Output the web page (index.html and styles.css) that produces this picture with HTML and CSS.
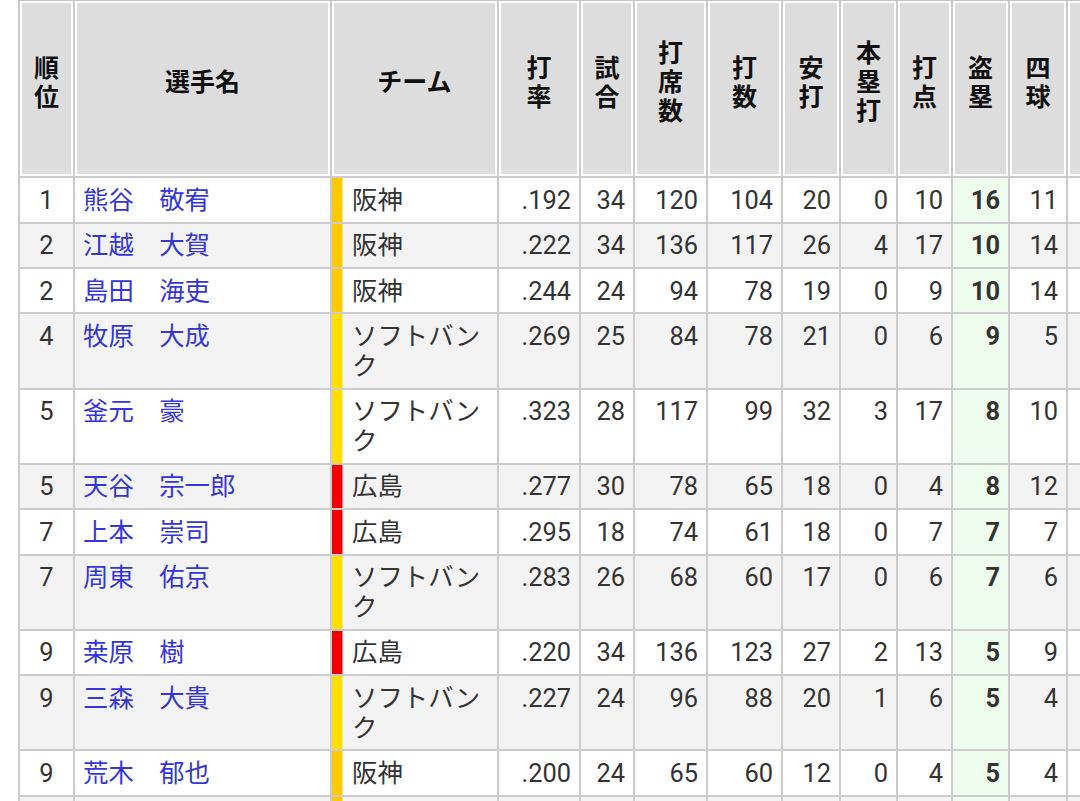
FILE: index.html
```html
<!DOCTYPE html>
<html lang="ja">
<head>
<meta charset="utf-8">
<title>盗塁ランキング</title>
<link rel="stylesheet" href="styles.css">
</head>
<body>
<div class="wrap">
<table class="stats">
<thead>
<tr>
<th class="w-rank">順<br>位</th>
<th class="w-name">選手名</th>
<th class="w-team">チーム</th>
<th class="w-avg">打<br>率</th>
<th class="w-g">試<br>合</th>
<th class="w-pa">打<br>席<br>数</th>
<th class="w-ab">打<br>数</th>
<th class="w-h">安<br>打</th>
<th class="w-hr">本<br>塁<br>打</th>
<th class="w-rbi">打<br>点</th>
<th class="w-sb">盗<br>塁</th>
<th class="w-bb">四<br>球</th>
<th class="w-x"></th>
</tr>
</thead>
<tbody>
<tr><td class="rank">1</td><td class="name"><a href="#">熊谷　敬宥</a></td><td class="team t-hanshin">阪神</td><td>.192</td><td>34</td><td>120</td><td>104</td><td>20</td><td>0</td><td>10</td><td class="sb">16</td><td>11</td><td></td></tr>
<tr><td class="rank">2</td><td class="name"><a href="#">江越　大賀</a></td><td class="team t-hanshin">阪神</td><td>.222</td><td>34</td><td>136</td><td>117</td><td>26</td><td>4</td><td>17</td><td class="sb">10</td><td>14</td><td></td></tr>
<tr><td class="rank">2</td><td class="name"><a href="#">島田　海吏</a></td><td class="team t-hanshin">阪神</td><td>.244</td><td>24</td><td>94</td><td>78</td><td>19</td><td>0</td><td>9</td><td class="sb">10</td><td>14</td><td></td></tr>
<tr><td class="rank">4</td><td class="name"><a href="#">牧原　大成</a></td><td class="team t-softbank">ソフトバンク</td><td>.269</td><td>25</td><td>84</td><td>78</td><td>21</td><td>0</td><td>6</td><td class="sb">9</td><td>5</td><td></td></tr>
<tr><td class="rank">5</td><td class="name"><a href="#">釜元　豪</a></td><td class="team t-softbank">ソフトバンク</td><td>.323</td><td>28</td><td>117</td><td>99</td><td>32</td><td>3</td><td>17</td><td class="sb">8</td><td>10</td><td></td></tr>
<tr><td class="rank">5</td><td class="name"><a href="#">天谷　宗一郎</a></td><td class="team t-hiroshima">広島</td><td>.277</td><td>30</td><td>78</td><td>65</td><td>18</td><td>0</td><td>4</td><td class="sb">8</td><td>12</td><td></td></tr>
<tr><td class="rank">7</td><td class="name"><a href="#">上本　崇司</a></td><td class="team t-hiroshima">広島</td><td>.295</td><td>18</td><td>74</td><td>61</td><td>18</td><td>0</td><td>7</td><td class="sb">7</td><td>7</td><td></td></tr>
<tr><td class="rank">7</td><td class="name"><a href="#">周東　佑京</a></td><td class="team t-softbank">ソフトバンク</td><td>.283</td><td>26</td><td>68</td><td>60</td><td>17</td><td>0</td><td>6</td><td class="sb">7</td><td>6</td><td></td></tr>
<tr><td class="rank">9</td><td class="name"><a href="#">桒原　樹</a></td><td class="team t-hiroshima">広島</td><td>.220</td><td>34</td><td>136</td><td>123</td><td>27</td><td>2</td><td>13</td><td class="sb">5</td><td>9</td><td></td></tr>
<tr><td class="rank">9</td><td class="name"><a href="#">三森　大貴</a></td><td class="team t-softbank">ソフトバンク</td><td>.227</td><td>24</td><td>96</td><td>88</td><td>20</td><td>1</td><td>6</td><td class="sb">5</td><td>4</td><td></td></tr>
<tr><td class="rank">9</td><td class="name"><a href="#">荒木　郁也</a></td><td class="team t-hanshin">阪神</td><td>.200</td><td>24</td><td>65</td><td>60</td><td>12</td><td>0</td><td>4</td><td class="sb">5</td><td>4</td><td></td></tr>
<tr class="hidden-row"><td class="rank"></td><td class="name"></td><td class="team t-hanshin"></td><td></td><td></td><td></td><td></td><td></td><td></td><td></td><td class="sb"></td><td></td><td></td></tr>
</tbody>
</table>
</div>
</body>
</html>
```

FILE: styles.css
```css
html, body {
  margin: 0;
  padding: 0;
  background: #ffffff;
  overflow: hidden;
}

.wrap {
  padding-left: 18px;
  width: 1200px;
}

.stats {
  border-collapse: separate;
  border-spacing: 0;
  table-layout: fixed;
  width: 1130px;
  border-left: 2px solid #cccccc;
  border-top: 1px solid #c4c4c4;
  font-family: Roboto, "Noto Sans CJK JP", sans-serif;
}

.stats th,
.stats td {
  box-sizing: border-box;
  border-right: 2px solid #cccccc;
  border-bottom: 2px solid #cccccc;
}

.stats th {
  height: 177.3px;
  padding: 0 2px 12px;
  background: #dddddd;
  box-shadow: inset 0 0 0 2px #ffffff;
  color: #111111;
  font-size: 25px;
  line-height: 29px;
  font-weight: 700;
  text-align: center;
  vertical-align: middle;
}

.w-rank { width: 55px; }
.w-name { width: 257px; }
.w-team { width: 167px; }
.w-avg { width: 82px; }
.w-g { width: 54px; }
.w-pa { width: 73px; }
.w-ab { width: 75px; }
.w-h { width: 58px; }
.w-hr { width: 57px; }
.w-rbi { width: 55px; }
.w-sb { width: 57px; }
.w-bb { width: 58px; }
.w-x { width: 80px; }

.stats td {
  padding: 7.5px 8px 6.1px;
  color: #333333;
  font-size: 25.4px;
  line-height: 29.8px;
  text-align: right;
  vertical-align: top;
  background: #ffffff;
}

.stats tbody tr:nth-child(even) td {
  background: #f3f3f3;
}

.stats .hidden-row td {
  height: 45.4px;
}

.stats td.rank {
  text-align: center;
  padding-left: 0;
  padding-right: 0;
}

.stats td.name {
  text-align: left;
}

.stats td.name a {
  color: #3636d8;
  text-decoration: none;
}

.stats td.team {
  text-align: left;
  padding-left: 20px;
}

.stats td.sb,
.stats tbody tr:nth-child(even) td.sb {
  background: #eefcee;
  font-weight: 700;
}

.t-hanshin { box-shadow: inset 10.5px 0 0 #fdc900; }
.t-softbank { box-shadow: inset 10.5px 0 0 #ffdf00; }
.t-hiroshima { box-shadow: inset 10.5px 0 0 #f00000; }
```
